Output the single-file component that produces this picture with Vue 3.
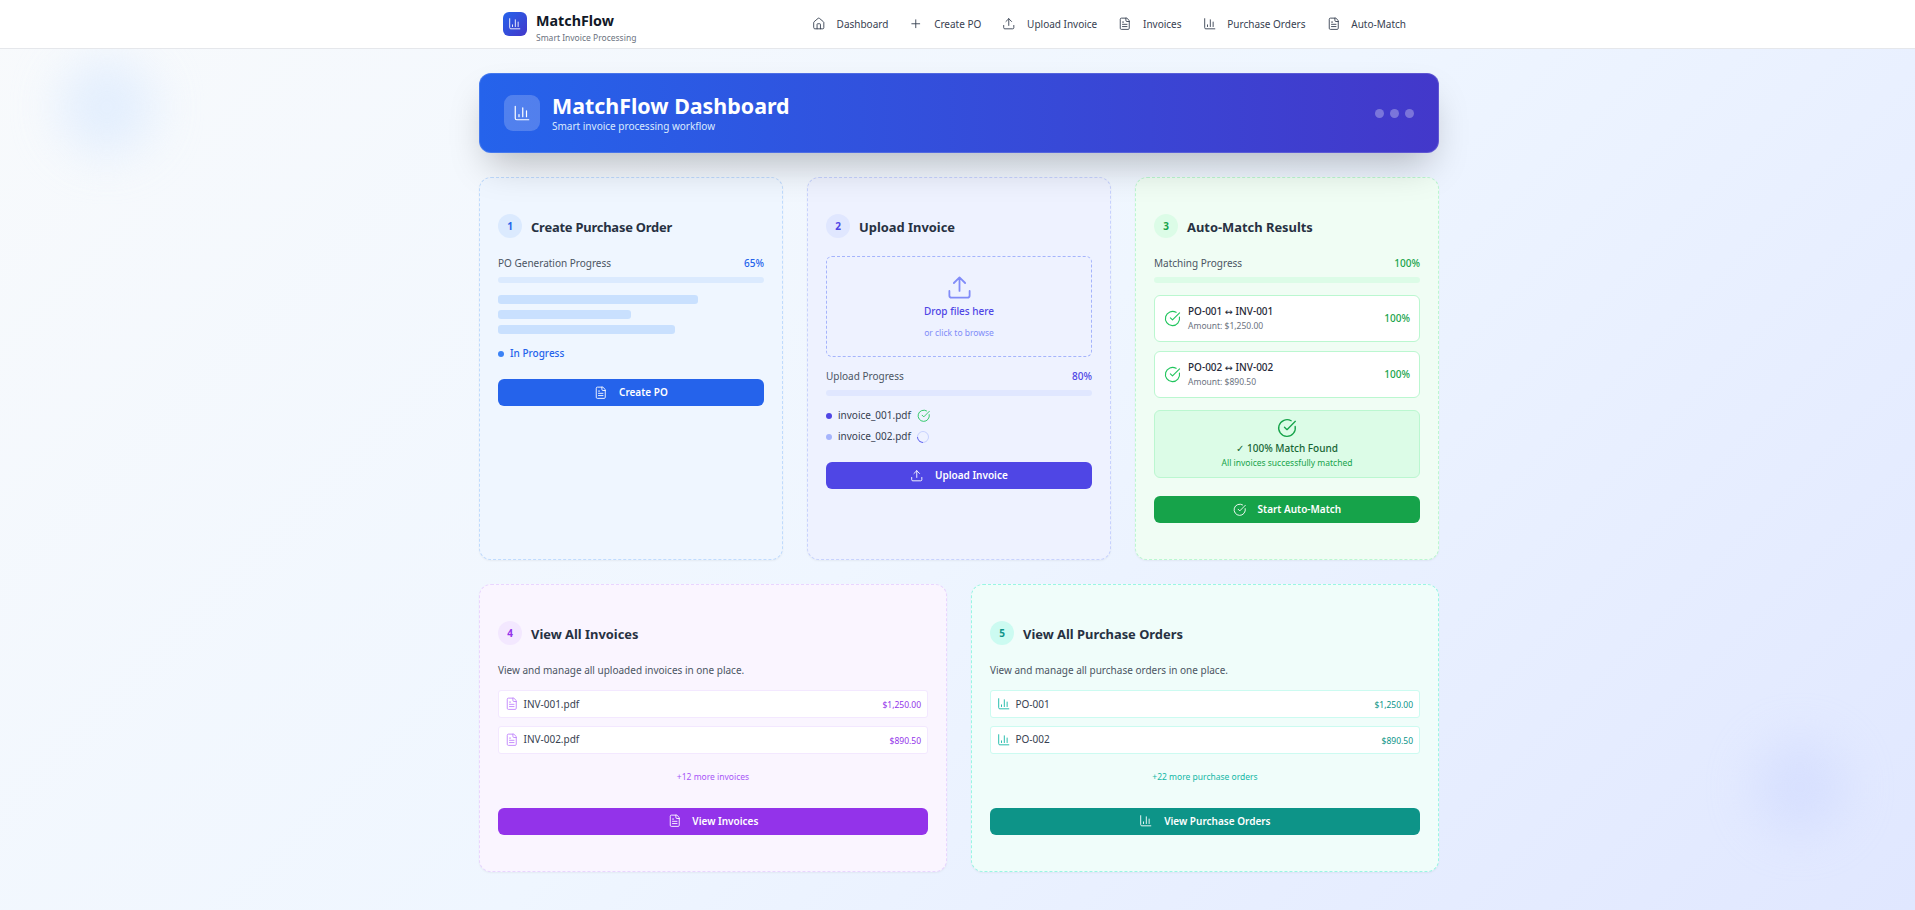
<script setup>
const navItems = [
  { label: 'Dashboard', icon: 'home' },
  { label: 'Create PO', icon: 'plus' },
  { label: 'Upload Invoice', icon: 'upload' },
  { label: 'Invoices', icon: 'file' },
  { label: 'Purchase Orders', icon: 'chart' },
  { label: 'Auto-Match', icon: 'file' },
]
const paths = {
  home: 'M15 21v-8a1 1 0 0 0-1-1h-4a1 1 0 0 0-1 1v8M3 10a2 2 0 0 1 .709-1.528l7-5.999a2 2 0 0 1 2.582 0l7 5.999A2 2 0 0 1 21 10v9a2 2 0 0 1-2 2H5a2 2 0 0 1-2-2z',
  plus: 'M5 12h14M12 5v14',
  upload: 'M21 15v4a2 2 0 0 1-2 2H5a2 2 0 0 1-2-2v-4M17 8l-5-5-5 5M12 3v12',
  file: 'M15 2H6a2 2 0 0 0-2 2v16a2 2 0 0 0 2 2h12a2 2 0 0 0 2-2V7ZM14 2v4a2 2 0 0 0 2 2h4M10 9H8M16 13H8M16 17H8',
  chart: 'M3 3v16a2 2 0 0 0 2 2h16M18 17V9M13 17V5M8 17v-3',
  check: 'M21.801 10A10 10 0 1 1 17 3.335M9 11l3 3L22 4',
}
const matches = [
  { po: 'PO-001', inv: 'INV-001', amount: 'Amount: $1,250.00' },
  { po: 'PO-002', inv: 'INV-002', amount: 'Amount: $890.50' },
]
</script>

<template>
  <div class="page">
    <div class="blob blob-a"></div>
    <div class="blob blob-b"></div>

    <header class="topbar">
      <div class="topbar-inner">
        <div class="brand">
          <div class="brand-logo">
            <svg class="ic13" viewBox="0 0 24 24"><path :d="paths.chart" /></svg>
          </div>
          <div class="brand-text">
            <div class="brand-name">MatchFlow</div>
            <div class="brand-sub">Smart Invoice Processing</div>
          </div>
        </div>
        <nav class="nav">
          <a v-for="item in navItems" :key="item.label" class="nav-link">
            <svg class="ic13" viewBox="0 0 24 24"><path :d="paths[item.icon]" /></svg>
            <span>{{ item.label }}</span>
          </a>
        </nav>
      </div>
    </header>

    <main class="main">
      <section class="banner">
        <div class="banner-left">
          <div class="banner-icon">
            <svg class="ic18" viewBox="0 0 24 24"><path :d="paths.chart" /></svg>
          </div>
          <div>
            <h1 class="banner-title">MatchFlow Dashboard</h1>
            <p class="banner-sub">Smart invoice processing workflow</p>
          </div>
        </div>
        <div class="dots"><i></i><i></i><i></i></div>
      </section>

      <div class="row-three">
        <section class="card card-blue">
          <div class="card-head">
            <span class="badge">1</span>
            <h2>Create Purchase Order</h2>
          </div>
          <div class="progress-label"><span>PO Generation Progress</span><b>65%</b></div>
          <div class="track"></div>
          <div class="skeleton">
            <div class="sk w75"></div>
            <div class="sk w50"></div>
            <div class="sk w66"></div>
          </div>
          <div class="status"><i></i><span>In Progress</span></div>
          <button class="btn">
            <svg class="ic13" viewBox="0 0 24 24"><path :d="paths.file" /></svg>
            <span>Create PO</span>
          </button>
        </section>

        <section class="card card-indigo">
          <div class="card-head">
            <span class="badge">2</span>
            <h2>Upload Invoice</h2>
          </div>
          <div class="dropzone">
            <svg class="ic27" viewBox="0 0 24 24"><path :d="paths.upload" /></svg>
            <div class="drop-title">Drop files here</div>
            <div class="drop-sub">or click to browse</div>
          </div>
          <div class="progress-label"><span>Upload Progress</span><b>80%</b></div>
          <div class="track"></div>
          <div class="files">
            <div class="file-row">
              <i class="fdot"></i><span>invoice_001.pdf</span>
              <svg class="ic13 green" viewBox="0 0 24 24"><path :d="paths.check" /></svg>
            </div>
            <div class="file-row">
              <i class="fdot light"></i><span>invoice_002.pdf</span>
              <span class="spinner"></span>
            </div>
          </div>
          <button class="btn">
            <svg class="ic13" viewBox="0 0 24 24"><path :d="paths.upload" /></svg>
            <span>Upload Invoice</span>
          </button>
        </section>

        <section class="card card-green">
          <div class="card-head">
            <span class="badge">3</span>
            <h2>Auto-Match Results</h2>
          </div>
          <div class="progress-label"><span>Matching Progress</span><b>100%</b></div>
          <div class="track"></div>
          <div class="matches">
            <div v-for="m in matches" :key="m.po" class="match">
              <svg class="ic17 green" viewBox="0 0 24 24"><path :d="paths.check" /></svg>
              <div class="match-text">
                <div class="match-title">{{ m.po }} <span class="arrow">↔</span> {{ m.inv }}</div>
                <div class="match-amount">{{ m.amount }}</div>
              </div>
              <b class="match-pct">100%</b>
            </div>
          </div>
          <div class="success">
            <svg class="ic20" viewBox="0 0 24 24"><path :d="paths.check" /></svg>
            <div class="success-title">✓ 100% Match Found</div>
            <div class="success-sub">All invoices successfully matched</div>
          </div>
          <button class="btn">
            <svg class="ic13" viewBox="0 0 24 24"><path :d="paths.check" /></svg>
            <span>Start Auto-Match</span>
          </button>
        </section>
      </div>

      <div class="row-two">
        <section class="card card-purple">
          <div class="card-head">
            <span class="badge">4</span>
            <h2>View All Invoices</h2>
          </div>
          <p class="desc">View and manage all uploaded invoices in one place.</p>
          <div class="list">
            <div class="list-row">
              <svg class="ic13" viewBox="0 0 24 24"><path :d="paths.file" /></svg>
              <span class="list-name">INV-001.pdf</span><span class="list-amt">$1,250.00</span>
            </div>
            <div class="list-row">
              <svg class="ic13" viewBox="0 0 24 24"><path :d="paths.file" /></svg>
              <span class="list-name">INV-002.pdf</span><span class="list-amt">$890.50</span>
            </div>
          </div>
          <div class="more">+12 more invoices</div>
          <button class="btn">
            <svg class="ic13" viewBox="0 0 24 24"><path :d="paths.file" /></svg>
            <span>View Invoices</span>
          </button>
        </section>

        <section class="card card-teal">
          <div class="card-head">
            <span class="badge">5</span>
            <h2>View All Purchase Orders</h2>
          </div>
          <p class="desc">View and manage all purchase orders in one place.</p>
          <div class="list">
            <div class="list-row">
              <svg class="ic13" viewBox="0 0 24 24"><path :d="paths.chart" /></svg>
              <span class="list-name">PO-001</span><span class="list-amt">$1,250.00</span>
            </div>
            <div class="list-row">
              <svg class="ic13" viewBox="0 0 24 24"><path :d="paths.chart" /></svg>
              <span class="list-name">PO-002</span><span class="list-amt">$890.50</span>
            </div>
          </div>
          <div class="more">+22 more purchase orders</div>
          <button class="btn">
            <svg class="ic13" viewBox="0 0 24 24"><path :d="paths.chart" /></svg>
            <span>View Purchase Orders</span>
          </button>
        </section>
      </div>
    </main>
  </div>
</template>

<style>
html, body { margin: 0; padding: 0; }
</style>

<style scoped>
* { box-sizing: border-box; }
svg { fill: none; stroke: currentColor; stroke-width: 1.6; stroke-linecap: round; stroke-linejoin: round; flex: none; display: block; }
.ic13 { width: 13.5px; height: 13.5px; }
.ic17 { width: 17px; height: 17px; }
.ic18 { width: 18px; height: 18px; }
.ic20 { width: 20px; height: 20px; }
.ic27 { width: 27px; height: 27px; }
.green { color: #22c55e; }

.page {
  position: relative;
  min-height: 910px;
  overflow: hidden;
  padding-left: 3px;
  font-family: "Noto Sans", "Liberation Sans", "DejaVu Sans", sans-serif;
  font-size: 10px;
  line-height: 15px;
  color: #374151;
  background: linear-gradient(135deg, #f8fafc 0%, #eff6ff 50%, #e0e7ff 100%);
}
.blob { position: absolute; border-radius: 50%; filter: blur(24px); }
.blob-a { left: 59px; top: 59px; width: 96px; height: 96px; background: #dbeafe; opacity: .7; }
.blob-b { left: 1752px; top: 739px; width: 96px; height: 96px; background: #c7d2fe; opacity: .4; }

.topbar { position: relative; height: 49px; margin-left: -3px; padding-left: 3px; background: #fff; border-bottom: 1px solid #e5e7eb; }
.topbar-inner { width: 960px; margin: 0 auto; height: 48px; padding: 0 24px; display: flex; align-items: center; justify-content: space-between; }
.brand { display: flex; align-items: center; gap: 9px; }
.brand-logo { width: 24px; height: 24px; border-radius: 6px; color: #fff; background: linear-gradient(135deg, #2563eb, #4338ca); display: flex; align-items: center; justify-content: center; }
.brand-text { align-self: flex-start; padding-top: 7.5px; }
.brand-name { font-size: 14.3px; line-height: 20px; font-weight: 700; color: #111827; }
.brand-sub { font-size: 8.5px; line-height: 13.5px; color: #6b7280; margin-top: -.25px; }
.nav { display: flex; gap: 3px; }
.nav-link { display: flex; align-items: center; gap: 11.25px; padding: 0 9px; height: 30px; color: #374151; }

.main { position: relative; width: 960px; margin: 0 auto; padding: 24px 0; }
.banner {
  position: relative; z-index: 1; height: 80px; padding: 0 25px; border-radius: 12px; color: #fff;
  display: flex; align-items: center; justify-content: space-between;
  background: linear-gradient(90deg, #2563eb, #4338ca);
  box-shadow: inset 0 0 0 1px rgba(255, 255, 255, .15), 0 19px 37px -9px rgba(0, 0, 0, .25);
}
.banner-left { display: flex; align-items: center; gap: 12px; }
.banner-icon { width: 36px; height: 36px; border-radius: 9px; background: rgba(255,255,255,.2); display: flex; align-items: center; justify-content: center; }
.banner-title { margin: 0; font-size: 21.4px; line-height: 27px; font-weight: 700; }
.banner-sub { margin: 0; font-size: 10px; line-height: 15px; color: #dbeafe; }
.dots { display: flex; gap: 6px; }
.dots i { width: 9px; height: 9px; border-radius: 50%; background: rgba(255,255,255,.3); }

.row-three { display: grid; grid-template-columns: repeat(3, 1fr); gap: 24px; margin-top: 24px; }
.row-two { display: grid; grid-template-columns: repeat(2, 1fr); gap: 24px; margin-top: 24px; }
.card {
  --accent: #2563eb; --soft: #dbeafe; --line: #bfdbfe;
  padding: 36px 18px; border: 1px dashed var(--line); border-radius: 12px;
  box-shadow: 0 1px 2px rgba(0,0,0,.05);
  display: flex; flex-direction: column;
}
.card-blue { background: #eff6ff; }
.card-indigo { --accent: #4f46e5; --soft: #e0e7ff; --line: #c7d2fe; background: #eef2ff; }
.card-green { --accent: #16a34a; --soft: #dcfce7; --line: #bbf7d0; background: #f0fdf4; }
.card-purple { --accent: #9333ea; --soft: #f3e8ff; --line: #e9d5ff; background: #faf5ff; }
.card-teal { --accent: #0d9488; --soft: #ccfbf1; --line: #99f6e4; background: #f0fdfa; }

.card-head { display: flex; align-items: center; gap: 9px; margin-bottom: 18px; height: 24px; }
.card-head h2 { margin: 0; padding-top: 2px; font-size: 12.9px; line-height: 20px; font-weight: 700; color: #273142; }
.card-blue h2 { letter-spacing: -.2px; }
.badge { width: 24px; height: 24px; border-radius: 50%; background: var(--soft); color: var(--accent); font-size: 10px; font-weight: 700; display: flex; align-items: center; justify-content: center; }

.progress-label { display: flex; justify-content: space-between; margin-bottom: 6px; color: #4b5563; }
.progress-label b { font-weight: 500; color: var(--accent); }
.track { height: 6px; border-radius: 999px; background: var(--soft); flex: none; }

.skeleton { margin-top: 12px; display: flex; flex-direction: column; gap: 6px; }
.sk { height: 9px; border-radius: 3px; background: #bfdbfe; opacity: .8; }
.w75 { width: 75%; } .w50 { width: 50%; } .w66 { width: 66.66%; }
.status { margin-top: 12px; display: flex; align-items: center; gap: 6px; color: #2563eb; font-weight: 500; }
.status i { width: 6px; height: 6px; border-radius: 50%; background: #3b82f6; }

.btn {
  font: inherit; font-weight: 600; color: #fff; background: var(--accent); border: 0; border-radius: 6px;
  height: 27px; width: 100%; display: flex; align-items: center; justify-content: center; gap: 11.25px; flex: none;
}
.card-blue .btn { margin-top: 18px; }
.card-indigo .btn { margin-top: 18px; }
.card-green .btn { margin-top: 18px; }
.card-purple .btn, .card-teal .btn { margin-top: 24px; }

.dropzone {
  height: 101px; border: 1px dashed #a5b4fc; border-radius: 6px; margin-bottom: 12px; padding-top: 17px;
  display: flex; flex-direction: column; align-items: center; color: #818cf8;
}
.drop-title { margin-top: 2.5px; color: #4f46e5; font-weight: 500; }
.drop-sub { margin-top: 7.5px; font-size: 8.5px; line-height: 13.5px; color: #818cf8; }
.files { margin-top: 12px; display: flex; flex-direction: column; gap: 6px; color: #374151; }
.file-row { display: flex; align-items: center; gap: 6px; height: 15px; }
.fdot { width: 6px; height: 6px; border-radius: 50%; background: #4f46e5; }
.fdot.light { background: #a5b4fc; }
.spinner { width: 12px; height: 12px; border-radius: 50%; border: 1.75px solid #c7d2fe; border-left-color: #6366f1; transform: rotate(-45deg); }

.matches { margin-top: 12px; display: flex; flex-direction: column; gap: 9px; }
.match { height: 47px; background: #fff; border: 1px solid #bbf7d0; border-radius: 6px; padding: 0 9px; display: flex; align-items: center; gap: 7px; }
.match-text { flex: 1; }
.match-title { font-weight: 500; color: #1f2937; }
.arrow { font-family: "DejaVu Sans", sans-serif; font-size: 9.5px; font-weight: 400; }
.match-amount { font-size: 8.5px; line-height: 13.5px; color: #6b7280; }
.match-pct { font-weight: 500; color: #16a34a; }
.success { margin-top: 12px; height: 68px; padding-top: 7px; border: 1px solid #bbf7d0; border-radius: 6px; background: #dcfce7; display: flex; flex-direction: column; align-items: center; color: #16a34a; }
.success-title { margin-top: 3px; font-weight: 500; color: #166534; }
.success-sub { font-size: 8.5px; line-height: 13.5px; color: #16a34a; }

.desc { margin: 0 0 12px; color: #4b5563; }
.list { display: flex; flex-direction: column; gap: 7.5px; }
.list-row { height: 28px; padding: 0 6px; background: #fff; border: 1px solid var(--soft); border-radius: 3px; display: flex; align-items: center; gap: 5px; color: #374151; }
.card-purple .list-row svg { color: #c084fc; }
.card-teal .list-row svg { color: #14b8a6; }
.list-name { flex: 1; }
.list-amt { font-size: 8.5px; margin-top: 1px; color: var(--accent); }
.more { margin-top: 16.5px; text-align: center; font-size: 8.5px; line-height: 13.5px; }
.card-purple .more { color: #a855f7; }
.card-teal .more { color: #14b8a6; }
</style>
